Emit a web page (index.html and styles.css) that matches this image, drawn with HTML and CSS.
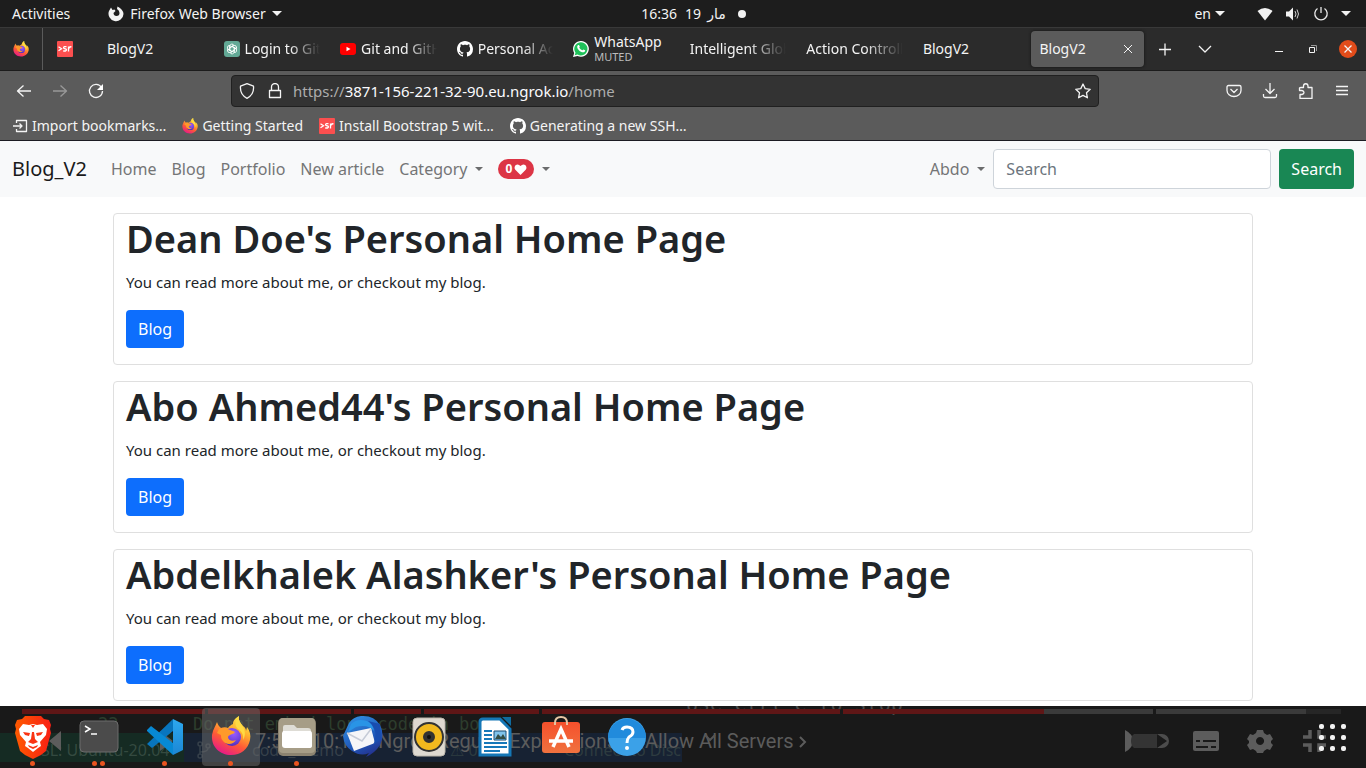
FILE: index.html
```html
<!DOCTYPE html>
<html lang="en">
<head>
<meta charset="utf-8">
<title>BlogV2</title>
<link rel="stylesheet" href="styles.css">
</head>
<body>
<svg class="defs" aria-hidden="true">
  <defs>
    <linearGradient id="flame" x1="0.8" y1="0" x2="0.3" y2="1"><stop offset="0" stop-color="#fff44f"/><stop offset="0.35" stop-color="#ffb02e"/><stop offset="0.65" stop-color="#ff5a36"/><stop offset="1" stop-color="#e5178b"/></linearGradient>
    <radialGradient id="globe" cx="0.6" cy="0.3" r="0.8"><stop offset="0" stop-color="#9a5cff"/><stop offset="0.6" stop-color="#6a3fd8"/><stop offset="1" stop-color="#4429a8"/></radialGradient>
    <linearGradient id="brave" x1="0" x2="1"><stop offset="0" stop-color="#ff5a00"/><stop offset="1" stop-color="#f81f14"/></linearGradient>
    <linearGradient id="code" x1="0" y1="0" x2="0" y2="1"><stop offset="0" stop-color="#2da8ef"/><stop offset="1" stop-color="#1c87d4"/></linearGradient>
    <linearGradient id="bird" x1="0.3" y1="0" x2="0.8" y2="1"><stop offset="0" stop-color="#2f8de0"/><stop offset="0.6" stop-color="#1f56b8"/><stop offset="1" stop-color="#252a85"/></linearGradient>
    <linearGradient id="bag" x1="0" y1="0" x2="0" y2="1"><stop offset="0" stop-color="#f5502c"/><stop offset="1" stop-color="#f0723f"/></linearGradient>
  </defs>
  <symbol id="i-firefox" viewBox="0 0 40 40">
    <path fill="url(#flame)" d="M1 19C2 13 5 9 6 6c1 3 2 4 4 6 2-1 5-1 7 0 1-2 3-3 5-4 0-4 3-6 6-8-1 5 2 7 4 10 2 1 3 3 3 5l1-4c3 4 4 8 3 13-2 9-9 15-19 15C9 39 0 31 1 19Z"/>
    <circle cx="21" cy="21" r="9" fill="url(#globe)"/>
    <path fill="#ff9a2a" d="M8 13c4-2 8-1 11 1 2 1 4 1 5 2-2 3-6 2-7 5 0 3 4 5 8 3-3 5-10 5-13 1-2-2-2-4-2-6l-4-2Z"/>
    <path fill="#ffdb43" d="M28 0c-1 5 2 7 4 11 3 5 2 10 0 13 1-6-2-9-5-11-3-3-4-8 1-13Z"/>
  </symbol>
  <symbol id="i-sr" viewBox="0 0 16 16"><rect width="16" height="16" rx="1" fill="#fb4f4f"/><path fill="none" stroke="#fff" stroke-width="1.3" d="m1.5 5.700 3 2-3 2M9.500 5.700H7.500Q6 6 7 7.500L9 8q1 1-.5 2H6.200M11.500 10.500v-5M11.500 8q.5-2.500 3-2.200"/></symbol>
  <symbol id="i-github" viewBox="0 0 16 16"><path fill="#fff" d="M8 0C3.580 0 0 3.580 0 8c0 3.540 2.290 6.530 5.470 7.590.4.070.55-.17.55-.38 0-.19-.01-.82-.01-1.490-2.010.37-2.530-.49-2.690-.94-.09-.23-.48-.94-.82-1.130-.28-.15-.68-.52-.01-.53.63-.01 1.080.58 1.230.82.72 1.210 1.870.87 2.330.66.070-.52.28-.87.51-1.070-1.780-.2-3.640-.89-3.640-3.950 0-.87.31-1.590.82-2.150-.08-.2-.36-1.020.08-2.120 0 0 .67-.21 2.200.82.64-.18 1.320-.27 2-.27s1.360.09 2 .27c1.530-1.040 2.200-.82 2.200-.82.44 1.100.16 1.920.08 2.120.51.56.82 1.270.82 2.150 0 3.070-1.870 3.750-3.650 3.950.29.25.54.73.54 1.480 0 1.070-.01 1.930-.01 2.200 0 .21.15.46.55.38A8.010 8.010 0 0 0 16 8c0-4.420-3.580-8-8-8Z"/></symbol>
  <symbol id="i-gpt" viewBox="0 0 16 16"><rect width="16" height="16" rx="3" fill="#63a996"/><g fill="none" stroke="#fff" stroke-width=".9"><path id="petal" d="M5.800 9.300V5.200a2.200 2.200 0 0 1 4.200-.8M5.800 6.700l3.400-2"/><use href="#petal" transform="rotate(60 8 8)"/><use href="#petal" transform="rotate(120 8 8)"/><use href="#petal" transform="rotate(180 8 8)"/><use href="#petal" transform="rotate(240 8 8)"/><use href="#petal" transform="rotate(300 8 8)"/></g></symbol>
  <symbol id="i-youtube" viewBox="0 0 16 16"><rect x="0" y="2" width="16" height="12" rx="3" fill="#f00"/><path fill="#fff" d="m6.500 5.800 4 2.200-4 2.200Z"/></symbol>
  <symbol id="i-whatsapp" viewBox="0 0 16 16"><path fill="#fff" d="m0 16 1.200-4A7.900 7.900 0 1 1 4.500 15Z"/><path fill="#1fc15a" d="m1.700 14.300.8-2.600A6.600 6.600 0 1 1 4.600 13.600Z"/><path fill="#fff" d="M5.300 4c.7-.3 1 .2 1.500 1.600.1.500-.6.800-.5 1.200.8 1.300 1.700 2 3 2.500.4 0 .7-1 1.100-.9l1.700.8c.3.400-.2 1.900-1.500 2.100C7.600 11.700 4.200 8 4.200 6c0-.9.500-1.700 1.100-2Z"/></symbol>
</svg>

<header class="topbar">
  <div class="topbar-left">
    <button class="plain">Activities</button>
    <button class="plain app-menu">
      <svg class="i16" viewBox="0 0 16 16"><path fill="#f2f2f2" d="M1 5 3 1.500 4.500 4l2-.5L7.500 5 5.500 7q.2 3 3 3 3 0 3-3 0-2.500-2.500-4L9.500.500Q15 3 15.500 8A7.500 7.500 0 1 1 1 5Z"/></svg>
      <span>Firefox Web Browser</span><i class="arrow"></i>
    </button>
  </div>
  <button class="plain clock"><span>16:36</span><span class="day">19</span><span class="month" lang="ar">مار</span><i class="dot"></i></button>
  <div class="topbar-right">
    <button class="plain lang"><span>en</span><i class="arrow"></i></button>
    <button class="plain system" aria-label="System">
      <svg class="i16" viewBox="0 0 16 16"><path fill="#f2f2f2" d="M.5 5Q8-1 15.500 5L8 14.500Z"/></svg>
      <svg class="i16" viewBox="0 0 16 16"><path fill="#f2f2f2" d="M1 5.500h3L8 1.500v13l-4-4H1Z"/><path fill="none" stroke="#ccc" d="M10 5q2 3 0 6M12 3.500q3 4.500 0 9"/></svg>
      <svg class="i16" viewBox="0 0 16 16"><path fill="none" stroke="#e8e8e8" stroke-width="1.300" d="M4.500 2.500a6.200 6.200 0 1 0 7 0M8 1v6"/></svg>
      <i class="arrow"></i>
    </button>
  </div>
</header>

<div class="tabstrip">
  <div class="pinned">
    <button class="plain view" aria-label="Firefox View"><svg class="i16"><use href="#i-firefox"/></svg></button>
    <button class="plain pin" aria-label="Pinned tab"><svg class="i16"><use href="#i-sr"/></svg></button>
  </div>
  <div class="tabs">
    <button class="tab"><span>BlogV2</span></button>
    <button class="tab"><svg class="i16"><use href="#i-gpt"/></svg><span class="fade">Login to GitHub</span></button>
    <button class="tab"><svg class="i16"><use href="#i-youtube"/></svg><span class="fade">Git and GitHub</span></button>
    <button class="tab"><svg class="i16"><use href="#i-github"/></svg><span class="fade">Personal Access</span></button>
    <button class="tab"><svg class="i16"><use href="#i-whatsapp"/></svg><span class="stack">WhatsApp<small>MUTED</small></span></button>
    <button class="tab"><span class="fade">Intelligent Global</span></button>
    <button class="tab"><span class="fade">Action Controller</span></button>
    <button class="tab"><span>BlogV2</span></button>
    <button class="tab active"><span>BlogV2</span><svg class="i16 tab-close" viewBox="0 0 16 16"><path class="line" d="m4 4 8 8M12 4l-8 8"/></svg></button>
  </div>
  <div class="window-tools">
    <button class="plain" aria-label="New tab"><svg class="i16" viewBox="0 0 16 16"><path class="line bold" d="M2 8.500h12M8 2.500v12"/></svg></button>
    <button class="plain" aria-label="List tabs"><svg class="i16" viewBox="0 0 16 16"><path class="line bold" d="m2 5 6 6 6-6"/></svg></button>
    <div class="window-buttons">
      <button class="plain" aria-label="Minimise"><svg class="i16" viewBox="0 0 16 16"><path class="line" d="M4 10.500h8"/></svg></button>
      <button class="plain" aria-label="Restore"><svg class="i16" viewBox="0 0 16 16"><path class="line" d="M4.500 6.500h5v5h-5Z"/><path fill="none" stroke="#999" d="M6 4.500h5.500V10"/></svg></button>
      <button class="close" aria-label="Close"><svg class="i16" viewBox="0 0 16 16"><path class="line bold" d="m4.500 4.500 7 7M11.500 4.500l-7 7"/></svg></button>
    </div>
  </div>
</div>

<div class="toolbar">
  <div class="nav-row">
    <div class="nav-left">
      <button class="plain" aria-label="Back"><svg class="i16" viewBox="0 0 16 16"><path class="line bold" d="M15 8H1.500M7.500 2.500 1.500 8l6 5.500"/></svg></button>
      <button class="plain dim" aria-label="Forward"><svg class="i16" viewBox="0 0 16 16"><path class="line bold" d="M1 8h13.500M8.500 2.500l6 5.500-6 5.500"/></svg></button>
      <button class="plain" aria-label="Reload"><svg class="i16" viewBox="0 0 16 16"><path class="line bold" d="M13.500 4.500a6.500 6.500 0 1 0 1 3.500"/><path fill="#fff" d="M15 1v6H9Z"/></svg></button>
    </div>
    <div class="urlbar">
      <svg class="i16" viewBox="0 0 16 16"><path class="line bold" d="m8 .7 6.500 2.500C15 8.500 12.500 13 8 15.300 3.500 13 1 8.500 1.500 3.200Z"/></svg>
      <svg class="i16" viewBox="0 0 16 16"><path class="line bold" d="M2.500 7.500h11v7h-11ZM4.500 7.500V4a3.500 3.500 0 0 1 7 0v3.500"/></svg>
      <div class="url" role="textbox" aria-label="Address" contenteditable="true" spellcheck="false">https://<b>3871-156-221-32-90.eu.ngrok.io</b>/home</div>
      <svg class="i16" viewBox="0 0 16 16"><path class="line bold" d="m8 1 2.200 4.600 5 .7-3.700 3.500.9 5L8 12.400l-4.400 2.400.9-5L.8 6.300l5-.7Z"/></svg>
    </div>
    <div class="nav-right">
      <button class="plain" aria-label="Pocket"><svg class="i16" viewBox="0 0 16 16"><path class="line bold" d="M2.500 2.500h11Q15 2.500 15 4v3.500a7 6 0 0 1-14 0V4q0-1.500 1.500-1.500ZM4.500 6 8 9.500 11.500 6"/></svg></button>
      <button class="plain" aria-label="Downloads"><svg class="i16" viewBox="0 0 16 16"><path class="line bold" d="M8 0v10.500M3.500 6 8 10.500 12.500 6M1.500 11v2q0 1.500 1.500 1.500h10q1.500 0 1.500-1.500v-2"/></svg></button>
      <button class="plain" aria-label="Extensions"><svg class="i16" viewBox="0 0 16 16"><path class="line bold" d="M2 15.500v-4h2q2-.5 2-2t-2-2H1.500V5Q2 4.500 3 4.500h2.500V3a2 2 0 0 1 4.500 0v1.500h4v11Z"/></svg></button>
      <button class="plain" aria-label="Menu"><svg class="i16" viewBox="0 0 16 16"><path class="line bold" d="M2 3.500h12M2 7.500h12M2 11.500h12"/></svg></button>
    </div>
  </div>
  <nav class="bookmarks">
    <a href="#"><svg class="i16" viewBox="0 0 16 16"><path class="line bold" d="M4.500 5V2.500h10v11h-10V11M1 8h9M7.500 5.500 10 8l-2.500 2.500"/></svg>Import bookmarks…</a>
    <a href="#"><svg class="i16"><use href="#i-firefox"/></svg>Getting Started</a>
    <a href="#"><svg class="i16"><use href="#i-sr"/></svg>Install Bootstrap 5 wit…</a>
    <a href="#"><svg class="i16"><use href="#i-github"/></svg>Generating a new SSH…</a>
  </nav>
</div>

<main class="page">
  <nav class="navbar">
    <a class="brand" href="#">Blog_V2</a>
    <a class="nav-link" href="#">Home</a>
    <a class="nav-link" href="#">Blog</a>
    <a class="nav-link" href="#">Portfolio</a>
    <a class="nav-link" href="#">New article</a>
    <button class="nav-link">Category<i class="caret"></i></button>
    <button class="nav-link" aria-label="Likes"><span class="badge">0<svg viewBox="0 0 12 11"><path fill="#fff" d="M6 11 .8 5.700Q-.8 3.500 1 1.300 3.500-.6 6 2 8.500-.6 11 1.300q1.800 2.200.2 4.400Z"/></svg></span><i class="caret"></i></button>
    <button class="nav-link user">Abdo<i class="caret"></i></button>
    <form class="search">
      <input type="search" placeholder="Search" aria-label="Search">
      <button class="btn success" type="button">Search</button>
    </form>
  </nav>
  <div class="container">
    <article class="card"><h1>Dean Doe's Personal Home Page</h1><p>You can read more about me, or checkout my blog.</p><a class="btn primary" href="#">Blog</a></article>
    <article class="card"><h1>Abo Ahmed44's Personal Home Page</h1><p>You can read more about me, or checkout my blog.</p><a class="btn primary" href="#">Blog</a></article>
    <article class="card"><h1>Abdelkhalek Alashker's Personal Home Page</h1><p>You can read more about me, or checkout my blog.</p><a class="btn primary" href="#">Blog</a></article>
  </div>
</main>

<footer class="dock">
  <div class="behind" aria-hidden="true">
    <div class="band green"></div><div class="band blue"></div>
    <span class="ghost mono stop">Use Ctrl-C to stop</span>
    <div class="progress"><i></i><i></i><i></i><i></i><i></i><i></i><i></i></div>
    <span class="ghost mono line-no">22</span>
    <span class="ghost mono comment">Do not embed long code in bo</span>
    <span class="ghost wsl">WSL: Ubuntu-20.04</span>
    <svg class="branch-icon" viewBox="0 0 14 18"><path fill="none" stroke="#36404a" stroke-width="1.500" d="M3 5v8M11 7q0 4-8 4M1 3a2 2 0 1 0 4 0 2 2 0 1 0-4 0M1 15a2 2 0 1 0 4 0 2 2 0 1 0-4 0M9 5a2 2 0 1 0 4 0 2 2 0 1 0-4 0"/></svg>
    <span class="ghost branch">code_memo</span>
    <span class="ghost warn">⚠ 0</span>
    <span class="ghost connect">Connect to Disc</span>
    <span class="ghost video time">7:57 / 10:18</span>
    <span class="ghost video title">Ngrok Regular Expressions to Allow All Servers</span>
    <svg class="prev" viewBox="0 0 140 24"><path d="m13 2v20L1 12ZM112 2l13 10-13 10Z" fill="#5c5c5c"/></svg>
    <svg class="chev" viewBox="0 0 12 10"><path d="m1 2 5 5 5-5" fill="none" stroke="#555" stroke-width="2"/></svg>
    <svg class="more" viewBox="0 0 8 12"><path d="m1 1 5 5-5 5" fill="none" stroke="#5c5c5c" stroke-width="2"/></svg>
    <svg class="controls" viewBox="0 0 210 24">
      <path fill="#5c5c5c" d="M0 1q8 4 8 11T0 23Z"/><path fill="#343434" d="M9 5h23v14H9q-3-2-3-7t3-7Z"/><path fill="#4c4c4c" d="M32 5h5a7 7 0 0 1 0 14h-5l10-7Z"/>
      <rect x="68" y="2" width="26" height="20" rx="2" fill="#5c5c5c"/><path stroke="#191919" stroke-width="2" d="M71 12h4m3 0h13M71 18h12m3 0h5"/>
      <path fill="#5c5c5c" fill-rule="evenodd" d="M132 1h6l1 3 3 2 3-1 3 5-2 2v2l2 2-3 5-3-1-3 2-1 2h-6l-1-2-3-2-3 1-3-5 2-2v-2l-2-2 3-5 3 1 3-2Zm3 7a4 4 0 1 0 .1 0Z"/>
      <path fill="none" stroke="#5c5c5c" stroke-width="3.500" d="M178 8h7V1M194 1v7h7M178 16h7v7M194 23v-7h7"/>
    </svg>
  </div>
  <div class="apps">
    <button class="app one" aria-label="Brave"><svg viewBox="0 0 40 44"><path fill="url(#brave)" d="m12 1-3 3-5 1-2 5 1 4-1 4 5 18 5 4 8 4 8-4 5-4 5-18-1-4 1-4-2-5-5-1-3-3Z"/><path fill="#fff" d="m6 14 4-5 6 1 4-1 4 1 6-1 4 5-1 6-6 7 1 4-3 2-5 4-5-4-3-2 1-4-6-7Z"/><path fill="#fa3413" d="m10 17 7 1-1 3-4-1ZM30 17l-7 1 1 3 4-1ZM19 17h2l1 7 3 3-5 2-5-2 3-3ZM15 30l5 2 5-2-1 2-4 2-4-2ZM18 10h4l-2 3Z"/></svg></button>
    <button class="app two" aria-label="Terminal"><svg viewBox="0 0 40 44"><rect x="1" y="6" width="38" height="31" rx="4" fill="#4b4b4b" stroke="#6c6c6c"/><path fill="none" stroke="#fff" stroke-width="1.500" d="m6 11 5 3-5 3M12 19h6"/></svg></button>
    <button class="app one" aria-label="Code"><svg viewBox="0 0 40 44"><path fill="#0875be" d="m2 29 26-25v12L7 33Z"/><path fill="#0789d4" d="m2 15 4-4 22 17v12L2 16Z"/><path fill="url(#code)" d="m28 4 10 5v26l-10 5Z"/></svg></button>
    <button class="app one focused" aria-label="Firefox"><svg viewBox="0 0 40 44"><use href="#i-firefox" y="1" width="40" height="40"/></svg></button>
    <button class="app one" aria-label="Files"><svg viewBox="0 0 40 44"><rect x="1" y="3" width="38" height="38" rx="5" fill="#8c8370"/><rect x="2" y="3" width="36" height="35" rx="4" fill="#a69d87"/><path fill="#dedcd5" d="M8 10h9l3 3h11q3 0 3 3v8H6V12q0-2 2-2Z"/><path fill="#fff" d="M6 16h27q2 0 2 3v12q0 2-3 2H8q-3 0-3-3V18Z"/></svg></button>
    <button class="app" aria-label="Thunderbird"><svg viewBox="0 0 40 44"><path fill="url(#bird)" d="M6 8q4-6 12-7 13-1 19 9 5 10 0 20-5 8-14 12l3-4q-8 4-17-2-8-5-9-15Z"/><path fill="#f5f5f8" d="m4 18 24-5 4 15-21 8Z"/><path fill="none" stroke="#c6cbd7" stroke-width="1.500" d="m4 18 15 8 9-12"/><path fill="#194db0" d="M25 6q12 10 5 24l8-6-1-15Z"/><path fill="#2994e6" d="M8 9q6-6 16-3 6 3 7 10-6-7-18-4l-8 5Z"/></svg></button>
    <button class="app" aria-label="Rhythmbox"><svg viewBox="0 0 40 44"><rect x="4" y="3" width="32" height="38" rx="4" fill="#ded9d0" stroke="#bdb7ac"/><circle cx="20" cy="22" r="14" fill="#333"/><circle cx="20" cy="22" r="10" fill="none" stroke="#f2b91e" stroke-width="8"/><circle cx="20" cy="22" r="14" fill="none" stroke="#333" stroke-width="2"/><circle cx="20" cy="22" r="5" fill="#333"/><circle cx="20" cy="22" r="2" fill="#111"/></svg></button>
    <button class="app" aria-label="Writer"><svg viewBox="0 0 40 44"><path fill="#fff" stroke="#1577b6" stroke-width="3" d="M8 4h17l10 10v26H5V7q0-3 3-3Z"/><path fill="#0f6b9f" d="M27 2h9v9Z"/><path stroke="#1779ba" stroke-width="2" d="M9 16h8M9 20h8M9 24h8M9 28h23M9 32h23M9 36h16"/><path fill="#80c3eb" stroke="#194d74" d="M19 16h12v9H19Z"/><path fill="#344e46" d="m20 24 3-5 3 3 2-3 3 5Z"/></svg></button>
    <button class="app" aria-label="Software"><svg viewBox="0 0 40 44"><rect x="1" y="7" width="38" height="31" rx="3" fill="url(#bag)"/><path fill="none" stroke="#e6c6a4" stroke-width="2" d="M14 10V8q0-6 6-6t6 6v2"/><path fill="none" stroke="#fff" stroke-width="3.500" d="m12 32 8-18 8 18M8 26h24"/></svg></button>
    <button class="app" aria-label="Help"><svg viewBox="0 0 40 44"><circle cx="20" cy="22" r="19" fill="#3ba1e8"/><path fill="#218bdc" d="M1 23a19 19 0 0 1 38 0Z"/><path fill="none" stroke="#fff" stroke-width="3" d="M15 15q1-3 5-3 6 0 6 5 0 3-4 5-2 2-2 6"/><circle cx="20" cy="33" r="2" fill="#fff"/></svg></button>
  </div>
  <button class="grid-button" aria-label="Show applications"><i></i><i></i><i></i><i></i><i></i><i></i><i></i><i></i><i></i></button>
</footer>
</body>
</html>
```
FILE: styles.css
```css
* { box-sizing: border-box; }
body { margin: 0; min-height: 100vh; display: flex; flex-direction: column; font: 14px/20px "Noto Sans", "DejaVu Sans", sans-serif; color: #f4f4f4; background: #fff; overflow: hidden; }
button { font: inherit; color: inherit; border: 0; cursor: pointer; }
a { color: inherit; text-decoration: none; }
svg { display: block; flex: none; }
.defs { position: absolute; width: 0; height: 0; }
.plain { display: flex; align-items: center; padding: 0; background: none; }
.i16 { width: 16px; height: 16px; }
.line { fill: none; stroke: #f4f4f4; stroke-width: 1; }
.bold { stroke-width: 1.3; stroke-linejoin: round; }
.arrow { border: 5px solid transparent; border-top-color: #f2f2f2; border-bottom: 0; }

.topbar { display: grid; grid-template-columns: 1fr auto 1fr; align-items: center; height: 27px; padding: 0 15px 0 12px; background: #1d1d1d; }
.topbar-left, .topbar-right { display: flex; align-items: center; }
.topbar-left { gap: 38px; }
.topbar-right { justify-content: flex-end; gap: 32px; }
.app-menu { gap: 6px; }
.clock { padding-left: 24px; }
.day { margin-left: 8px; }
.month { margin-left: 6px; }
.dot { width: 8px; height: 8px; margin-left: 12px; border-radius: 50%; background: #f2f2f2; }
.lang { gap: 4px; }
.system { gap: 12px; }

.tabstrip { display: flex; height: 44px; background: #2b2b2b; border-top: 1px solid #393939; border-bottom: 1px solid #1c1c1c; }
.pinned { display: flex; width: 99px; }
.view { width: 43px; justify-content: center; border-right: 1px solid #5b5b5b; }
.pin { padding-left: 14px; }
.tabs { flex: 1; min-width: 0; display: grid; grid-template-columns: repeat(9, minmax(0, 1fr)); }
.tab { display: flex; align-items: center; gap: 5px; min-width: 0; margin: 3px 4px 3px 0; padding: 0 8px; border-radius: 4px; background: none; text-align: left; white-space: nowrap; }
.tab.active { background: #5b5b5b; box-shadow: 0 0 3px #111; }
.tab-close { margin-left: auto; }
.fade { flex: 1; overflow: hidden; mask-image: linear-gradient(to right, #000 60%, transparent); }
.stack { line-height: 16px; }
.stack small { display: block; font-size: 11px; line-height: 14px; color: #bcbcbc; }
.window-tools { display: flex; align-items: center; gap: 24px; width: 218px; padding: 0 9px; }
.window-buttons { display: flex; align-items: center; gap: 18px; margin-left: auto; }
.close { display: grid; place-items: center; width: 18px; height: 18px; padding: 0; border-radius: 50%; background: #e24c1a; }

.toolbar { background: #5b5b5b; border-bottom: 1px solid #1c1c22; padding-top: 4px; }
.nav-row { display: flex; height: 32px; }
.nav-left { display: flex; width: 231px; padding-left: 16px; gap: 20px; }
.dim { opacity: .4; }
.urlbar { flex: 1; display: flex; align-items: center; gap: 12px; padding: 0 7px; background: #333; border: 1px solid #202020; border-radius: 4px; }
.url { flex: 1; margin-left: -2px; font-size: 15px; color: #adadad; outline: 0; }
.url b { font-weight: 400; color: #fbfbfe; }
.nav-right { display: flex; justify-content: flex-end; width: 267px; padding-right: 16px; gap: 20px; }
.bookmarks { display: flex; align-items: center; gap: 16px; height: 33px; padding: 4px 12px 0; }
.bookmarks a { display: flex; align-items: center; gap: 4px; }

.page { flex: 1; color: #212529; font-size: 15px; line-height: 24px; }
.navbar { display: flex; align-items: center; min-height: 56px; padding: 8px 12px; background: #f8f9fa; color: #747576; font-size: 16px; }
.brand { margin-right: 16px; font-size: 20px; line-height: 30px; color: #1a1a1a; }
.nav-link { display: flex; align-items: center; padding: 8px; background: none; white-space: nowrap; }
.nav-link + .nav-link { padding-left: 7px; }
.caret { margin-left: 8px; border: 4px solid transparent; border-top-color: #6b6c6d; border-bottom: 0; }
.badge { display: flex; align-items: center; gap: 2px; height: 20px; padding: 0 7px; border-radius: 10px; background: #dc3545; color: #fff; font-size: 12px; font-weight: 700; }
.badge svg { width: 13px; height: 11px; }
.user { margin-left: auto; }
.search { display: flex; gap: 8px; }
.search input { width: 278px; height: 40px; padding: 0 12px; border: 1px solid #ced4da; border-radius: 4px; font: inherit; background: #fff; }
.search input::placeholder { color: #6c757d; opacity: 1; }
.btn { display: inline-flex; align-items: center; padding: 6px 12px; min-height: 38px; border-radius: 4px; color: #fff; font-size: 16px; }
.success { background: #198754; }
.primary { background: #0d6efd; }
.container { max-width: 1140px; margin: 0 auto; padding-top: 16px; display: grid; gap: 16px; }
.card { border: 1px solid #dfdfdf; border-radius: 4px; padding: 0 12px 16px; }
.card h1 { margin: 0 0 8px; font-size: 38px; line-height: 48px; font-weight: 600; }
.card p { margin: 0 0 16px; }

.dock { position: relative; display: flex; justify-content: space-between; height: 62px; background: #191919; overflow: hidden; }
.apps { position: relative; display: flex; gap: 8px; padding: 2px 4px; }
.app { position: relative; display: flex; justify-content: center; width: 58px; height: 58px; padding: 7px 0 0; border-radius: 4px; background: none; }
.app svg { width: 40px; height: 44px; }
.focused { background: rgba(110, 110, 110, .5); }
.one::after, .two::after { content: ""; position: absolute; bottom: 0; left: 26px; width: 5px; height: 5px; border-radius: 50%; background: #e95420; }
.two::after { left: 22px; box-shadow: 8px 0 #e95420; }
.grid-button { position: relative; align-self: center; display: grid; grid-template-columns: repeat(3, 5px); gap: 6px; margin-right: 20px; padding: 0; background: none; }
.grid-button i { height: 5px; border-radius: 2px; background: #f2f2f2; }
.behind { position: absolute; inset: 0; }
.band { position: absolute; top: 27px; height: 29px; }
.green { left: 0; width: 184px; background: #152b23; }
.blue { left: 184px; width: 498px; background: #172233; }
.progress { position: absolute; top: 3px; left: 22px; right: 25px; height: 5px; display: grid; grid-template-columns: 183fr 143fr 67fr 115fr 299fr 310fr 185fr; gap: 3px; }
.progress i { background: #5f1616; }
.progress i:nth-child(6) { background: linear-gradient(to right, #5f1616 65%, #3a3a3a 65%); }
.progress i:nth-child(7) { background: linear-gradient(to right, #3a3a3a 81%, #262626 81%); }
.ghost { position: absolute; white-space: nowrap; color: #344a40; font-size: 16px; }
.mono { font-family: "DejaVu Sans Mono", monospace; font-size: 17px; color: #2d3d2d; }
.line-no { top: 8px; left: 98px; }
.comment { top: 8px; left: 193px; }
.wsl { top: 34px; left: 26px; }
.branch-icon { position: absolute; top: 35px; left: 197px; width: 14px; height: 18px; }
.branch { top: 34px; left: 252px; color: #36404a; }
.warn { top: 34px; left: 450px; color: #2e3c40; }
.connect { top: 34px; left: 564px; color: #2e3c40; }
.video { top: 25px; font: 20px/20px Roboto, sans-serif; color: #5c5c5c; }
.time { left: 255px; }
.title { left: 378px; }
.stop { top: -12px; left: 686px; font-size: 20px; color: #4a4a4a; }
.prev { position: absolute; top: 23px; left: 48px; width: 140px; height: 24px; }
.chev { position: absolute; top: 27px; left: 704px; width: 12px; height: 10px; }
.more { position: absolute; top: 30px; left: 799px; width: 8px; height: 12px; }
.controls { position: absolute; top: 23px; right: 31px; width: 210px; height: 24px; }
```
